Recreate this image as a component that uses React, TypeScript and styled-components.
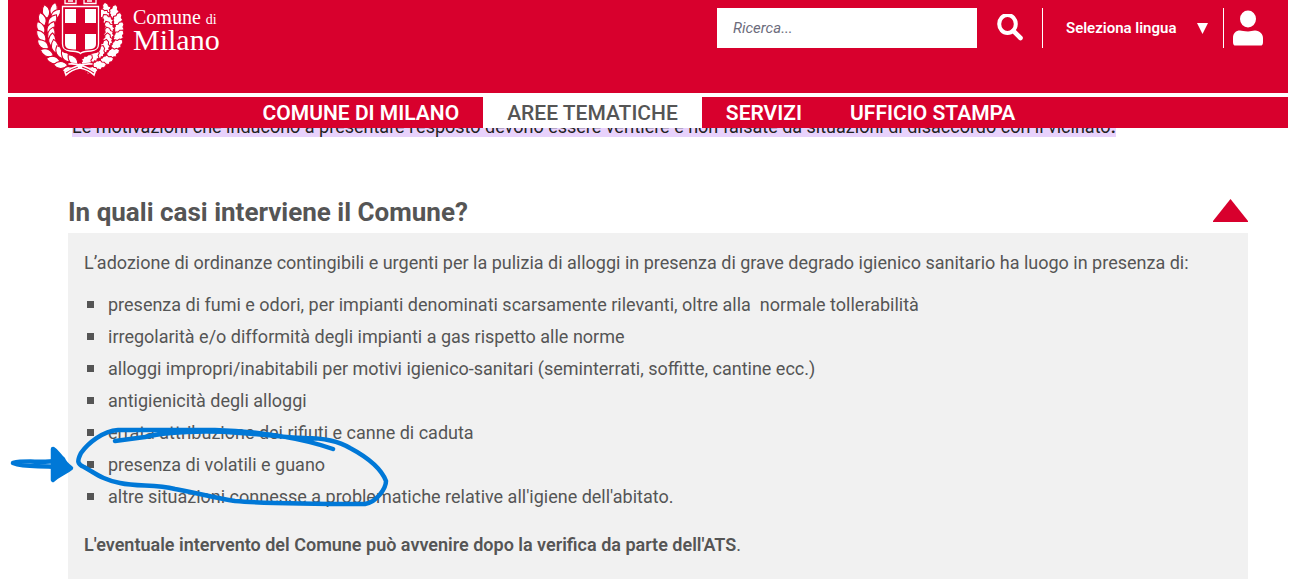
import React, { useState } from 'react';
import styled, { createGlobalStyle } from 'styled-components';

const RED = '#d8002d';
const GREY = '#555';

const GlobalStyle = createGlobalStyle`
  * { box-sizing: border-box; }
  body {
    margin: 0;
    background: #fff;
    color: ${GREY};
    font-family: Roboto, 'Liberation Sans', sans-serif;
    font-size: 18px;
  }
  button, input, select { font: inherit; }
`;

const Page = styled.div`
  position: relative;
  padding: 0 6px 0 8px;
`;

const Header = styled.header`
  position: relative;
  z-index: 1;
  background: #fff;
`;

const TopBar = styled.div`
  display: flex;
  justify-content: space-between;
  align-items: flex-start;
  height: 93px;
  padding: 0 16px 0 28px;
  background: ${RED};
  color: #fff;
`;

const Brand = styled.a`
  display: flex;
  gap: 9px;
  color: #fff;
  text-decoration: none;
  font-family: 'Liberation Serif', serif;
`;

const BrandText = styled.span`
  display: flex;
  flex-direction: column;
  padding-top: 8px;
`;

const BrandTop = styled.span`
  font-size: 20px;
  line-height: 19px;
  white-space: nowrap;
`;

const BrandSmall = styled.small`
  font-size: 14px;
`;

const BrandName = styled.span`
  font-size: 30px;
  line-height: 22px;
`;

const Tools = styled.div`
  display: flex;
  align-items: center;
  height: 40px;
  margin-top: 8px;
`;

const SearchForm = styled.form`
  display: flex;
  align-items: center;
  height: 40px;
`;

const SearchInput = styled.input`
  width: 260px;
  height: 40px;
  padding: 0 16px;
  border: 0;
  border-radius: 0;
  background: #fff;
  color: ${GREY};
  font-size: 15px;
  font-style: italic;
  font-weight: 400;
  &::placeholder { color: #6c6c7c; opacity: 1; }
`;

const IconButton = styled.button<{ $width: number }>`
  display: flex;
  justify-content: center;
  align-items: center;
  width: ${(p) => p.$width}px;
  height: 40px;
  padding: 0;
  border: 0;
  background: none;
  color: #fff;
  cursor: pointer;
`;

const Language = styled.div`
  display: flex;
  align-items: center;
  height: 40px;
  width: 182px;
  padding: 0 15px 0 23px;
  border: solid #fff;
  border-width: 0 1px;
`;

const LanguageSelect = styled.select`
  flex: 1;
  min-width: 0;
  height: 40px;
  padding: 0;
  border: 0;
  appearance: none;
  background: none;
  color: #fff;
  font-size: 15px;
  font-weight: 600;
`;

const Nav = styled.nav`
  display: flex;
  justify-content: center;
  margin-top: 4px;
  padding-right: 18px;
  background: ${RED};
`;

const NavLink = styled.a<{ $active?: boolean }>`
  height: 31px;
  padding: 1px 24px 0;
  background: ${(p) => (p.$active ? '#fff' : RED)};
  color: ${(p) => (p.$active ? GREY : '#fff')};
  font-size: 21px;
  font-weight: ${(p) => (p.$active ? 500 : 600)};
  line-height: 31px;
  text-decoration: none;
  white-space: nowrap;
`;

const Main = styled.main`
  padding: 0 40px 0 60px;
`;

const Intro = styled.p`
  width: fit-content;
  margin: -12px 0 0 4px;
  background: #e8d2fc;
  color: #222;
  line-height: 21px;
`;

const Title = styled.h2`
  margin: 60px 0 6px;
  font-size: 26px;
  font-weight: 700;
  line-height: 30px;
`;

const TitleButton = styled.button`
  display: flex;
  justify-content: space-between;
  align-items: flex-start;
  width: 100%;
  padding: 0;
  border: 0;
  background: none;
  color: ${GREY};
  text-align: left;
  cursor: pointer;
`;

const Marker = styled.svg`
  flex: none;
  margin-top: 2px;
`;

const Panel = styled.section`
  padding: 14px 16px 18px;
  background: #f1f1f1;
`;

const Text = styled.p`
  margin: 0;
  line-height: 32px;
`;

const Cases = styled.ul`
  margin: 10px 0 16px;
  padding: 0 0 0 3px;
  list-style: none;
`;

const Case = styled.li`
  display: flex;
  gap: 14px;
  line-height: 32px;
  &::before {
    content: '';
    flex: none;
    width: 7px;
    height: 7px;
    margin-top: 12px;
    background: ${GREY};
  }
`;

const Strong = styled.strong`
  font-weight: 600;
`;

const Ink = styled.svg`
  position: absolute;
  z-index: 2;
  top: 420px;
  left: 0;
  pointer-events: none;
`;

/* Stem points of the left branch: x, y, stem angle in degrees. */
const STEM = [
  [50, 16, 17],
  [47, 23, 8],
  [46, 31, 0],
  [47, 38, -10],
  [49, 45, -24],
  [53, 52, -38],
  [59, 58, -50],
  [66, 62, -60],
  [74, 66, -68],
];

const LAUREL = 'M0 0C-5 -4 -4.500 -10 0 -14C4.500 -10 5 -4 0 0Z';
const OAK =
  'M0 0L-3 -1.500L-2.800 -3L-5 -4L-4 -6L-5 -8L-2.800 -9.500L-2.600 -12L0 -14L2.600 -12L2.800 -9.500L5 -8L4 -6L5 -4L2.800 -3L3 -1.500Z';

function Branch({ leaf }: { leaf: string }) {
  return (
    <g fill="#fff" stroke={RED} strokeWidth="1">
      <path d={leaf} transform="translate(52 16) rotate(14)" />
      {STEM.map(([x, y, a]) => (
        <g key={y} transform={`translate(${x} ${y}) rotate(${a})`}>
          <path d={leaf} transform="translate(-2 3) rotate(-28)" />
          <path d={leaf} transform="translate(2 3) rotate(26)" />
        </g>
      ))}
    </g>
  );
}

function Emblem() {
  return (
    <svg width="88" height="78" viewBox="36 0 88 78" aria-hidden="true">
      <Branch leaf={LAUREL} />
      <g transform="translate(160 0) scale(-1 1)">
        <Branch leaf={OAK} />
      </g>
      <path d="M60 4H101V46C101 53 96 53 91 54L81 57L70 54C65 53 60 53 60 46Z" fill={RED} />
      <g fill="none" stroke="#fff">
        <path strokeWidth="1.3" d="M65 0V3.500H76V0M68 1H73M84 0V3.500H96V0M87 1H92" />
        <path
          strokeWidth="1.300"
          d="M62.500 6.500H98.500V44C98.500 49 96 50.500 91 51C86 51.500 83 51 80.500 53.500C78 51 75 51.500 70 51C65 50.500 62.500 49 62.500 44Z"
        />
      </g>
      <path
        fill="#fff"
        d="M65 9H76V23H65ZM85 9H96V23H85ZM65 34H76V49.500C70 49.500 65 49 65 44ZM85 34H96V44C96 49 91 49.500 85 49.500Z"
      />
      <g fill="none" strokeLinecap="round">
        <path stroke={RED} strokeWidth="5" d="M70 65C75 65 86 68 93 73M91 65C86 65 74 68 67 73" />
        <path
          stroke="#fff"
          strokeWidth="1.600"
          d="M69 64C77 63 88 67 95 72L94 75C90 71 85 69 80 68M92 64C84 63 72 67 65 72L66 75C70 71 75 69 80 68"
        />
      </g>
      <circle cx="80" cy="66" r="2.600" fill="#fff" />
    </svg>
  );
}

const SearchIcon = () => (
  <svg width="26" height="28" viewBox="0 0 26 28" aria-hidden="true">
    <ellipse cx="10.500" cy="10" rx="8.300" ry="9" fill="none" stroke="#fff" strokeWidth="4" />
    <path d="M16.500 17L23.500 24" stroke="#fff" strokeWidth="4.600" strokeLinecap="round" />
  </svg>
);

const UserIcon = () => (
  <svg width="30" height="36" viewBox="0 0 30 36" fill="#fff" aria-hidden="true">
    <ellipse cx="15" cy="9" rx="8" ry="8.500" />
    <path d="M1.500 35.500C0.500 35 0 34 0 32V28C0 23 3 20.500 7 20.500C9 20.500 11 21.500 15 21.500C18 21.500 19 20.500 22 20.500C27 21 30 24 30 28V32C30 34 29.500 35 28.500 35.500Z" />
  </svg>
);

const CASES = [
  'presenza di fumi e odori, per impianti denominati scarsamente rilevanti, oltre alla \u00a0normale tollerabilità',
  'irregolarità e/o difformità degli impianti a gas rispetto alle norme',
  'alloggi impropri/inabitabili per motivi igienico-sanitari (seminterrati, soffitte, cantine ecc.)',
  'antigienicità degli alloggi',
  'errata attribuzione dei rifiuti e canne di caduta',
  'presenza di volatili e guano',
  "altre situazioni connesse a problematiche relative all'igiene dell'abitato.",
];

export default function App() {
  const [open, setOpen] = useState(true);

  return (
    <Page>
      <GlobalStyle />
      <Header>
        <TopBar>
          <Brand href="#">
            <Emblem />
            <BrandText>
              <BrandTop>
                Comune <BrandSmall>di</BrandSmall>
              </BrandTop>
              <BrandName>Milano</BrandName>
            </BrandText>
          </Brand>
          <Tools>
            <SearchForm role="search" onSubmit={(e) => e.preventDefault()}>
              <SearchInput type="text" placeholder="Ricerca..." aria-label="Ricerca" />
              <IconButton $width={65} type="submit" aria-label="Cerca">
                <SearchIcon />
              </IconButton>
            </SearchForm>
            <Language>
              <LanguageSelect aria-label="Seleziona lingua">
                <option>Seleziona lingua</option>
              </LanguageSelect>
              <svg width="11" height="11" viewBox="0 0 11 11" aria-hidden="true">
                <path d="M0 0H11L5.500 11Z" fill="#fff" />
              </svg>
            </Language>
            <IconButton $width={48} type="button" aria-label="Area personale">
              <UserIcon />
            </IconButton>
          </Tools>
        </TopBar>
        <Nav>
          <NavLink href="#">COMUNE DI MILANO</NavLink>
          <NavLink href="#" $active>
            AREE TEMATICHE
          </NavLink>
          <NavLink href="#">SERVIZI</NavLink>
          <NavLink href="#">UFFICIO STAMPA</NavLink>
        </Nav>
      </Header>
      <Main>
        <Intro>
          Le motivazioni che inducono a presentare l'esposto devono essere veritiere e non falsate da
          situazioni di disaccordo con il vicinato<Strong>.</Strong>
        </Intro>
        <Title>
          <TitleButton type="button" aria-expanded={open} onClick={() => setOpen(!open)}>
            In quali casi interviene il Comune?
            <Marker width="35" height="23" viewBox="0 0 35 23" aria-hidden="true">
              <path d="M17.500 0L35 22V23H0V22Z" fill={RED} />
            </Marker>
          </TitleButton>
        </Title>
        {open && (
          <Panel>
            <Text>
              L’adozione di ordinanze contingibili e urgenti per la pulizia di alloggi in presenza di
              grave degrado igienico sanitario ha luogo in presenza di:
            </Text>
            <Cases>
              {CASES.map((item) => (
                <Case key={item}>{item}</Case>
              ))}
            </Cases>
            <Text>
              <Strong>
                L'eventuale intervento del Comune può avvenire dopo la verifica da parte dell'ATS
              </Strong>
              .
            </Text>
          </Panel>
        )}
      </Main>
      <Ink width="400" height="100" viewBox="0 420 400 100" aria-hidden="true">
        <g fill="none" stroke="#0078d7" strokeWidth="4.500" strokeLinecap="round" strokeLinejoin="round">
          <path d="M333 449C305 439 260 431 215 430H118C103 431 88 443 81 453C77 461 77 464 84 467C95 473 103 480 120 483C138 487 155 484 175 489C197 493 215 498 235 501C268 504 320 504 365 504C377 502 386 488 386 481C381 468 365 456 350 448C340 442 325 438 305 438C275 437 262 434 240 433C205 430 165 432 145 437L115 441" />
          <path d="M13 463C25 460 40 463 56 461M13 463C25 468 40 465 56 467" />
          <path fill="#0078d7" d="M53 449C58 452 59 456 63 459C65 464 68 466 71 468C65 473 58 475 53 480Z" />
        </g>
      </Ink>
    </Page>
  );
}
